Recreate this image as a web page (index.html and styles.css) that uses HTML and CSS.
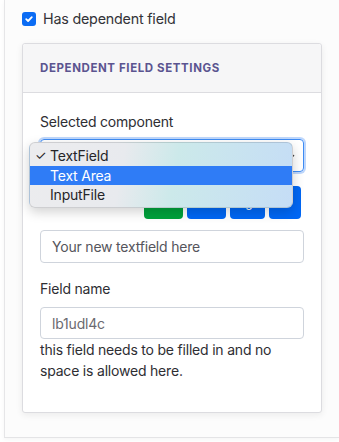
FILE: index.html
```html
<!DOCTYPE html>
<html>
<head>
<meta charset="utf-8">
<link rel="stylesheet" href="styles.css">
</head>
<body>
<div class="panel">
  <label class="check-row">
    <span class="checkbox">
      <svg width="14" height="14" viewBox="0 0 14 14"><path d="M4.2 7.2 L6.1 9 L9.8 5.2" fill="none" stroke="#fff" stroke-width="1.8" stroke-linecap="round" stroke-linejoin="round"/></svg>
    </span>
    <span class="check-text">Has dependent field</span>
  </label>

  <div class="card">
    <div class="card-header">Dependent field settings</div>
    <div class="card-body">
      <div class="field-label">Selected component</div>
      <div class="select-wrap">
        <div class="select">
          <span class="select-value">TextField</span>
          <svg class="chevron" width="10" height="8" viewBox="0 0 10 8"><path d="M1.5 2.5 L5 6 L8.5 2.5" fill="none" stroke="#444" stroke-width="1.6" stroke-linecap="round" stroke-linejoin="round"/></svg>
        </div>
        <div class="popup">
          <div class="opt"><span class="tick">✓</span>TextField</div>
          <div class="opt opt-active">Text Area</div>
          <div class="opt">InputFile</div>
        </div>
      </div>

      <div class="label-row">
        <span class="field-label">Label</span>
        <div class="btns">
          <span class="btn btn-green">sm</span>
          <span class="btn btn-blue btn-w">md</span>
          <span class="btn btn-blue btn-n">lg</span>
          <span class="btn btn-blue btn-s">xl</span>
        </div>
      </div>

      <div class="input placeholder">Your new textfield here</div>

      <div class="field-label fl2">Field name</div>
      <div class="input input2 value">lb1udl4c</div>
      <p class="help">this field needs to be filled in and no space is allowed here.</p>
    </div>
  </div>
</div>
</body>
</html>
```

FILE: styles.css
```css
* { box-sizing: border-box; }
html, body { margin: 0; padding: 0; background: #fff; }
body {
  font-family: Inter, "Noto Sans", "Liberation Sans", sans-serif;
  font-size: 14px;
  letter-spacing: -0.2px;
  color: #2e2e33;
  width: 339px;
  height: 442px;
  overflow: hidden;
}
.panel {
  margin-left: 4px;
  height: 438px;
  border-left: 1px solid #e6e6e8;
  border-bottom: 1px solid #e4e4e6;
  background: #fcfcfc;
  box-shadow: 0 2px 4px rgba(0,0,0,0.04);
  padding: 11px 0 0 16px;
}
.check-row {
  display: flex;
  align-items: center;
  gap: 7px;
  height: 15px;
  margin-left: 1px;
}
.checkbox {
  width: 14px;
  height: 14px;
  border-radius: 3px;
  background: #0b6cf4;
  display: flex;
}
.check-text { font-size: 14.3px; color: #333338; line-height: 15px; }
.card {
  margin-top: 17px;
  width: 300px;
  margin-left: 1px;
  height: 370px;
  border: 1px solid #dcdce0;
  border-radius: 3px;
  background: #fff;
  box-shadow: 0 2px 7px rgba(0,0,0,0.07);
}
.card-header {
  height: 49px;
  background: #f6f6f7;
  border-bottom: 1px solid #dcdce0;
  padding-left: 17px;
  display: flex;
  align-items: center;
  font-size: 11.5px;
  font-weight: 700;
  letter-spacing: 0.6px;
  text-transform: uppercase;
  color: #5b5490;
  border-radius: 3px 3px 0 0;
}
.card-body {
  padding: 19px 17px 0 17px;
}
.field-label {
  line-height: 20px;
  font-size: 14px;
  color: #2e2e33;
}
.select-wrap {
  position: relative;
  margin-top: 7px;
}
.select {
  height: 33px;
  border: 1px solid #3f8cf4;
  border-radius: 4px;
  box-shadow: 0 0 0 2px rgba(70,140,245,0.35);
  display: flex;
  align-items: center;
  justify-content: space-between;
  padding: 0 8px 0 11px;
}
.chevron { margin-top: 2px; }
.popup {
  position: absolute;
  left: -11px;
  top: 3px;
  width: 264px;
  height: 66px;
  border-radius: 6px;
  border: 1px solid rgba(0,0,0,0.12);
  background:
    linear-gradient(100deg, #ececee 0%, #e8eaee 35%, #cce9ea 55%, #c5ddf6 100%);
  box-shadow: 0 4px 12px rgba(0,0,0,0.18);
  padding: 3px 0;
  z-index: 2;
}
.opt {
  height: 19.5px;
  line-height: 19.5px;
  padding-left: 20px;
  position: relative;
  color: #252528;
  font-size: 14px;
}
.tick {
  position: absolute;
  left: 5px;
  top: 0;
  font-size: 13px;
}
.opt-active {
  background: #2f7cf6;
  color: #fff;
}
.label-row {
  margin-top: 14px;
  display: flex;
  justify-content: space-between;
  align-items: center;
  height: 33px;
}
.btns {
  display: flex;
  gap: 4px;
  padding-right: 3px;
}
.btn {
  height: 33px;
  border-radius: 4px;
  color: #fff;
  font-size: 12px;
  display: flex;
  align-items: center;
  justify-content: center;
}
.btn-green { background: #00a23c; width: 39px; }
.btn-blue { background: #0067f4; }
.btn-w { width: 39px; }
.btn-n { width: 35px; }
.btn-s { width: 32px; }
.input {
  margin-top: 11px;
  height: 33px;
  border: 1px solid #cfd4dc;
  border-radius: 4px;
  display: flex;
  align-items: center;
  padding-left: 11px;
  font-size: 14px;
}
.placeholder { color: #55555c; }
.fl2 { margin-top: 16px; }
.input2 { margin-top: 8px; height: 32px; }
.value { color: #6a6a70; }
.help {
  margin: 0;
  line-height: 21px;
  font-size: 14px;
  color: #2e2e33;
  width: 240px;
}
```
